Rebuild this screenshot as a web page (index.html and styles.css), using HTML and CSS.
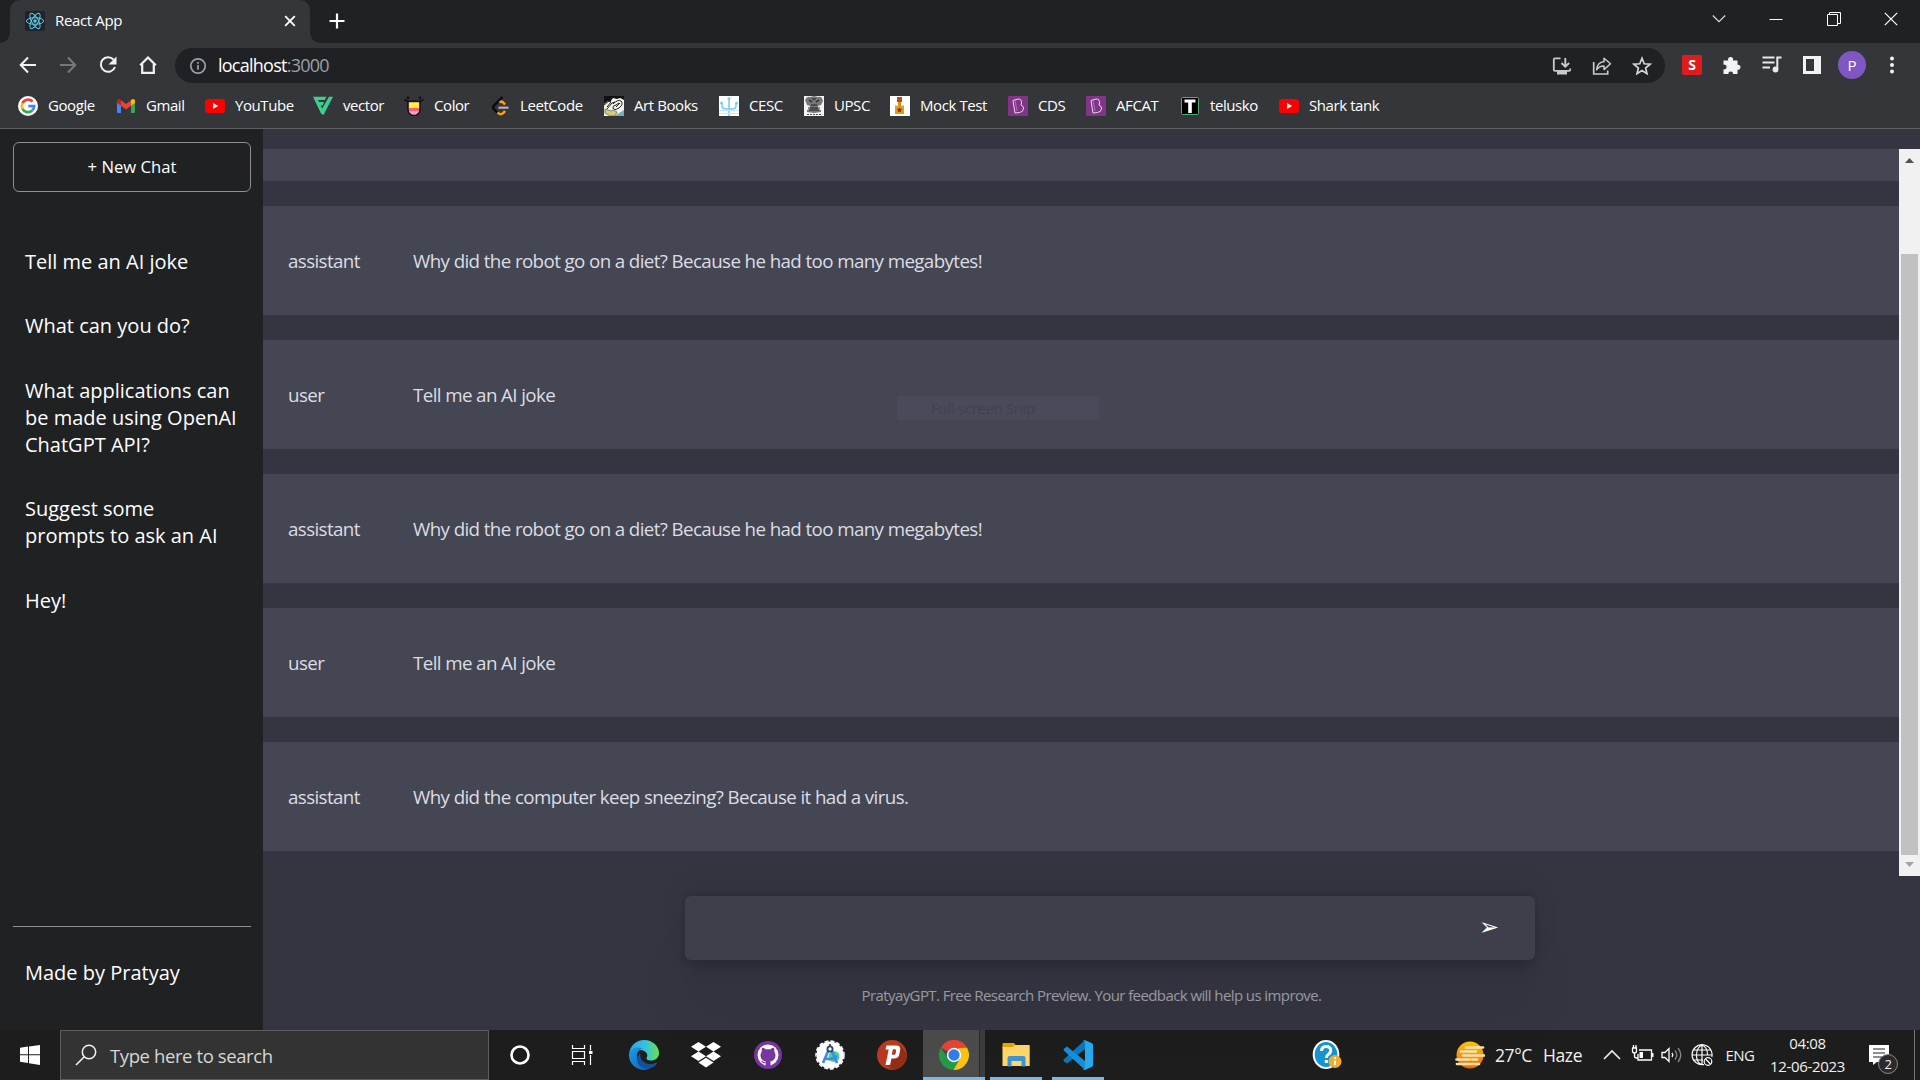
FILE: index.html
```html
<!DOCTYPE html>
<html lang="en">
<head>
<meta charset="utf-8">
<title>React App</title>
<link rel="stylesheet" href="styles.css">
</head>
<body>
<div class="screen">
  <header class="browser">
    <div class="tabstrip">
      <div class="tab">
        <svg class="tab-icon" width="20" height="20" viewBox="0 0 20 20"><rect width="20" height="20" rx="1.5" fill="#20232a"/><g fill="none" stroke="#5ccbe8" stroke-width="1"><ellipse cx="10" cy="10" rx="8.6" ry="3.3"/><ellipse cx="10" cy="10" rx="8.6" ry="3.3" transform="rotate(60 10 10)"/><ellipse cx="10" cy="10" rx="8.6" ry="3.3" transform="rotate(120 10 10)"/></g><circle cx="10" cy="10" r="1.7" fill="#5ccbe8"/></svg>
        <span class="tab-title">React App</span>
        <svg class="tab-close" width="12" height="12" viewBox="0 0 12 12"><path d="M1.2 1.2 10.8 10.8M10.8 1.2 1.2 10.8" stroke="#fff" stroke-width="1.9"/></svg>
      </div>
      <svg class="new-tab" width="16" height="16" viewBox="0 0 16 16"><path d="M8 .5v15M.5 8h15" stroke="#fff" stroke-width="2.2"/></svg>
      <div class="window-buttons">
        <svg width="14" height="14" viewBox="0 0 14 14"><path d="M.8 3.5 7 9.7l6.200-6.200" fill="none" stroke="#ddd" stroke-width="1.100"/></svg>
        <svg width="14" height="14" viewBox="0 0 14 14"><path d="M.5 7.500h13" stroke="#fff" stroke-width="1"/></svg>
        <svg width="14" height="14" viewBox="0 0 14 14"><path d="M.5 2.500h10v11H.5zM2.500 2.500V.500h11V11.500h-3" fill="none" stroke="#fff"/></svg>
        <svg width="14" height="14" viewBox="0 0 14 14"><path d="M.8.800 13.200 13.200M13.200.8.8 13.200" stroke="#fff" stroke-width="1.200"/></svg>
      </div>
    </div>
    <div class="toolbar">
      <div class="nav-buttons">
        <svg width="20" height="20" viewBox="0 0 20 20"><path d="M18 10H3M10 2.500 2.700 10l7.300 7.500" fill="none" stroke="#f1f1f1" stroke-width="2"/></svg>
        <svg width="20" height="20" viewBox="0 0 20 20"><path d="M2 10h15M10 2.500l7.300 7.500-7.300 7.500" fill="none" stroke="#77787b" stroke-width="2"/></svg>
        <svg width="20" height="20" viewBox="0 0 20 20"><path d="M15.500 4.500A7.300 7.300 0 1 0 17 12" fill="none" stroke="#f1f1f1" stroke-width="2"/><path d="M18.500 1.500v8h-8z" fill="#f1f1f1"/></svg>
        <svg width="20" height="20" viewBox="0 0 20 20"><path d="M4.200 9v8.800h11.600V9M2.200 10.300 10 2.500l7.800 7.800" fill="none" stroke="#f1f1f1" stroke-width="2.200"/></svg>
      </div>
      <div class="omnibox">
        <svg width="18" height="18" viewBox="0 0 18 18"><circle cx="9" cy="9" r="7.200" fill="none" stroke="#9aa0a6" stroke-width="1.700"/><path d="M9 8v4.700M9 5v1.800" stroke="#9aa0a6" stroke-width="1.700"/></svg>
        <span class="url">localhost<span class="port">:3000</span></span>
        <div class="omnibox-actions">
          <svg width="20" height="20" viewBox="0 0 20 20"><path d="M8.500 2.300H3A1.200 1.200 0 0 0 1.800 3.500v10.200a1.200 1.200 0 0 0 1.200 1.200h14a1.200 1.200 0 0 0 1.200-1.200V12.500" fill="none" stroke="#c9cacc" stroke-width="1.800"/><path d="M5 15h10v3.500H5z" fill="#c9cacc"/><path d="M13.300 2v8M9.500 7l3.800 3.700L17.100 7" fill="none" stroke="#c9cacc" stroke-width="1.900"/></svg>
          <svg width="20" height="20" viewBox="0 0 20 20"><path d="M1.700 6v12h14v-3.500" fill="none" stroke="#c9cacc" stroke-width="1.700"/><path d="M12 2.300v3.400C7.500 6 5 9 4.600 13.800 6.500 11 8.800 10 12 10v3.600l6.500-5.800z" fill="none" stroke="#c9cacc" stroke-width="1.500" stroke-linejoin="round"/></svg>
          <svg width="20" height="20" viewBox="0 0 20 20"><path d="m10 2.300 2.200 5.500 5.900.4-4.500 3.800 1.400 5.700-5-3.100-5 3.100 1.400-5.700L1.900 8.200l5.900-.4z" fill="none" stroke="#d5d6d8" stroke-width="1.700"/></svg>
        </div>
      </div>
      <div class="extensions">
        <span class="ext-s">S</span>
        <svg width="20" height="20" viewBox="0 0 20 20"><path d="M1.500 5.500h4.700a2.600 2.600 0 1 1 4.800 0h4.500v4.300a2.500 2.500 0 1 1 0 4.900v4.300h-4.400a2.400 2.400 0 1 0-4.800 0H1.500v-4.700a2.400 2.400 0 1 0 0-4.600z" fill="#f1f3f4"/></svg>
        <svg width="20" height="20" viewBox="0 0 20 20"><path d="M.5 2.500h12M.5 7.500h12M.5 12.500h7.500" stroke="#e8eaed" stroke-width="2"/><path d="M15.300 14V2.500h4.200" fill="none" stroke="#e8eaed" stroke-width="2"/><circle cx="13.500" cy="14.500" r="2.900" fill="#e8eaed"/></svg>
        <svg width="20" height="20" viewBox="0 0 20 20"><path d="M1 1h18v18H1zM4 4v12h8V4z" fill="#f1f3f4" fill-rule="evenodd"/></svg>
        <span class="avatar">P</span>
        <svg width="20" height="20" viewBox="0 0 20 20"><g fill="#f1f3f4"><circle cx="10" cy="3.500" r="2"/><circle cx="10" cy="10" r="2"/><circle cx="10" cy="16.500" r="2"/></g></svg>
      </div>
    </div>
    <nav class="bookmarks">
      <a><svg width="20" height="20" viewBox="0 0 20 20"><circle cx="10" cy="10" r="10" fill="#fff"/><g fill="none" stroke-width="2.700"><path d="M14.600 5.600A6.200 6.200 0 0 0 4.500 7.200" stroke="#ea4335"/><path d="M4.500 7.200a6.200 6.200 0 0 0 0 5.600" stroke="#fbbc05"/><path d="M4.500 12.800a6.200 6.200 0 0 0 9.700 1.800" stroke="#34a853"/><path d="M14.200 14.600A6.200 6.200 0 0 0 16.200 10.200H10.300" stroke="#4285f4"/></g></svg><span>Google</span></a>
      <a><svg width="20" height="20" viewBox="0 0 20 20"><path d="M1 5.500v10.200c0 .8.500 1.300 1.200 1.300H5V8.500z" fill="#4285f4"/><path d="M19 5.500v10.200c0 .8-.5 1.300-1.200 1.300H15V8.500z" fill="#34a853"/><path d="M15 4.300V9.700l4-3V5.200c0-2-2-2.800-3.400-1.600z" fill="#fbbc04"/><path d="M5 4.300V9.700l-4-3V5.200c0-2 2-2.800 3.400-1.600z" fill="#c5221f"/><path d="M5 4.300 10 8l5-3.700v5.400l-5 3.800-5-3.800z" fill="#ea4335"/></svg><span>Gmail</span></a>
      <a><svg width="20" height="20" viewBox="0 0 20 20"><rect y="3" width="20" height="14" rx="3.500" fill="#f00"/><path d="m8 7 5.200 3L8 13z" fill="#fff"/></svg><span>YouTube</span></a>
      <a><svg width="20" height="20" viewBox="0 0 20 20"><path d="M0 .8h13.500L11.700 4H5l1 2h5.200L9.500 9.500H7.700l1.500 3L16 .8h4L10.500 19 8 17.500z" fill="#3ecf8e"/></svg><span>vector</span></a>
      <a><svg width="20" height="20" viewBox="0 0 20 20"><circle cx="4" cy="1.800" r="1.400" fill="#111"/><circle cx="16" cy="1.800" r="1.400" fill="#111"/><path d="M.5 3.500 4 5.500h12l3.500-2" fill="none" stroke="#111" stroke-width="1.500"/><path d="M4 5.500v8a6 6 0 0 0 12 0v-8z" fill="#f4a0d8" stroke="#111" stroke-width="1.500"/><path d="M5 6.500h10V12H5z" fill="#fff13a"/><path d="M5 12h10v3H5z" fill="#ff5c75"/></svg><span>Color</span></a>
      <a><svg width="20" height="20" viewBox="0 0 20 20"><path d="m12.500 1-8.600 8.600a2.500 2.500 0 0 0 0 3.500l4 4" fill="none" stroke="#0b0b0b" stroke-width="2.400"/><path d="m9.500 6.500 2-1q1 0 3.500 3M7.500 16.500q4 4 7.500-1.500" fill="none" stroke="#ffa116" stroke-width="2.400"/><path d="M8.500 11.700h10" stroke="#b3b3b3" stroke-width="2.200"/></svg><span>LeetCode</span></a>
      <a><svg width="20" height="20" viewBox="0 0 20 20"><path d="M0 0h20v20H0z" fill="#f3f4ea"/><path d="M0 0h20v4l-4-2-3 1-4-1-3 4-2-1-4 3z" fill="#111"/><path d="m0 9 5-4 2 1-4 5M3 13l5-6 3-1M9 8q5-5 8-3 3 3-2 7-5 3-6 0-1-2 3-3l3-2M12 11l4-4" fill="none" stroke="#222" stroke-width="1"/><path d="m1 13 6 2 2-1 4 2-2 4H6l-5-3z" fill="#dccb72" stroke="#445" stroke-width=".6"/><path d="m12 19 8-5v6h-8z" fill="#6cb5b7"/></svg><span>Art Books</span></a>
      <a><svg width="20" height="20" viewBox="0 0 20 20"><path d="M0 0h20v20H0z" fill="#fff"/><path d="M10 3v17M3 7v2.500q0 3.500 4 3.500h6q4 0 4-3.500V7" fill="none" stroke="#7fcdf5" stroke-width="1.600"/><g fill="#7fcdf5"><circle cx="10" cy="2.500" r="1.600"/><circle cx="2.500" cy="7" r="1.500"/><circle cx="17.500" cy="7" r="1.500"/></g><path d="M0 14.500h20M0 17.500h20" stroke="#c5e7fa"/></svg><span>CESC</span></a>
      <a><svg width="20" height="20" viewBox="0 0 20 20"><path d="M0 0h20v20H0z" fill="#f4f4f4"/><path d="M1 4q2-4 5-3l4-1 4 1q4-1 5 4l-2 4-3 1v3l3 1v2l-7 1-7-1v-2l3-1v-3L3 9z" fill="#777"/><path d="m5 4 3 2M12 6l3-2M8 3h4M7 9h6M5 14h10M4 12h12" stroke="#222" stroke-width="1.200"/><path d="M3 18.500h14" stroke="#555" stroke-dasharray="2 1"/></svg><span>UPSC</span></a>
      <a><svg width="20" height="20" viewBox="0 0 20 20"><path d="M0 0h20v20H0z" fill="#fff"/><path d="M7 1h5v5H7z" fill="#c9451f"/><path d="M8 6h3v4H8z" fill="#c8921c"/><path d="M5 9.500h9V18H5z" fill="#d9a51b"/><path d="m9.500 11 .9 1.800 2 .3-1.500 1.300.4 2-1.800-1-1.800 1 .4-2-1.500-1.300 2-.3z" fill="#a3251b"/></svg><span>Mock Test</span></a>
      <a><svg width="20" height="20" viewBox="0 0 20 20"><rect width="20" height="20" rx="1" fill="#813588"/><path d="m5 4.500 5-1.500q4 0 3.500 4l-.5 2q3 1 2.500 4-.5 3-4 3.500L7 17z" fill="none" stroke="#ead4ed" stroke-width="1"/><path d="m7 4 2 11" stroke="#b990bf" stroke-width=".7"/></svg><span>CDS</span></a>
      <a><svg width="20" height="20" viewBox="0 0 20 20"><rect width="20" height="20" rx="1" fill="#813588"/><path d="m5 4.500 5-1.500q4 0 3.500 4l-.5 2q3 1 2.500 4-.5 3-4 3.500L7 17z" fill="none" stroke="#ead4ed" stroke-width="1"/><path d="m7 4 2 11" stroke="#b990bf" stroke-width=".7"/></svg><span>AFCAT</span></a>
      <a><svg width="20" height="20" viewBox="0 0 20 20"><rect x="1.500" y="1.500" width="17" height="17" rx="1" fill="#000" stroke="#4fae71"/><path d="M4.500 3.500h11v3h-3.700V17H8.200V6.500H4.500z" fill="#fff"/></svg><span>telusko</span></a>
      <a><svg width="20" height="20" viewBox="0 0 20 20"><rect y="3" width="20" height="14" rx="3.500" fill="#f00"/><path d="m8 7 5.200 3L8 13z" fill="#fff"/></svg><span>Shark tank</span></a>
    </nav>
  </header>

  <div class="app">
    <aside class="sidebar">
      <button class="new-chat">+ New Chat</button>
      <ul class="history">
        <li>Tell me an AI joke</li>
        <li>What can you do?</li>
        <li>What applications can be made using OpenAI ChatGPT API?</li>
        <li>Suggest some prompts to ask an AI</li>
        <li>Hey!</li>
      </ul>
      <footer class="credit">Made by Pratyay</footer>
    </aside>
    <main class="chat">
      <div class="feed-wrap">
        <ul class="feed">
          <li class="message cut"></li>
          <li class="message"><span class="role">assistant</span><span>Why did the robot go on a diet? Because he had too many megabytes!</span></li>
          <li class="message"><span class="role">user</span><span>Tell me an AI joke</span></li>
          <li class="message"><span class="role">assistant</span><span>Why did the robot go on a diet? Because he had too many megabytes!</span></li>
          <li class="message"><span class="role">user</span><span>Tell me an AI joke</span></li>
          <li class="message"><span class="role">assistant</span><span>Why did the computer keep sneezing? Because it had a virus.</span></li>
        </ul>
        <div class="scrollbar">
          <svg width="9" height="5" viewBox="0 0 9 5"><path d="M0 5 4.500 0 9 5z" fill="#505050"/></svg>
          <div class="thumb"></div>
          <svg width="9" height="5" viewBox="0 0 9 5"><path d="M0 0h9L4.500 5z" fill="#a3a3a3"/></svg>
        </div>
      </div>
      <div class="composer"><span class="send">➢</span></div>
      <p class="info">PratyayGPT. Free Research Preview. Your feedback will help us improve.</p>
      <div class="snip-tip">Full-screen Snip</div>
    </main>
  </div>

  <footer class="taskbar">
    <div class="start"><svg width="20" height="20" viewBox="0 0 20 20"><path d="M0 2.800 8 1.600v7.600H0zM9 1.500 20 0v9.200H9zM0 10.200h8v7.700l-8-1.200zM9 10.200h11V20L9 18.300z" fill="#fff"/></svg></div>
    <div class="search">
      <svg width="22" height="22" viewBox="0 0 22 22"><circle cx="14" cy="8" r="6.700" fill="none" stroke="#f0f0f0" stroke-width="1.500"/><path d="M9.300 12.700 1 21" stroke="#f0f0f0" stroke-width="1.600"/></svg>
      <span>Type here to search</span>
    </div>
    <div class="launcher">
      <div><svg width="20" height="20" viewBox="0 0 20 20"><circle cx="10" cy="10" r="8.500" fill="none" stroke="#fff" stroke-width="2.600"/></svg></div>
      <div><svg width="22" height="20" viewBox="0 0 22 20"><path d="M1.500 0v3.500h12V0M1.500 20v-3.500h12V20M1.500 6.500h12v7h-12zM19.500 0v5.500M19.500 10v10" fill="none" stroke="#fff" stroke-width="1.200"/><path d="M18 6h3.500v3H18z" fill="#fff"/></svg></div>
      <div><svg width="30" height="30" viewBox="0 0 30 30"><defs><linearGradient id="e1" x1="0" x2="1"><stop offset="0" stop-color="#2aa5e5"/><stop offset=".55" stop-color="#35c1e0"/><stop offset="1" stop-color="#6be04c"/></linearGradient><linearGradient id="e2" x1="0" y1="0" x2="1" y2="1"><stop offset="0" stop-color="#1b9de2"/><stop offset="1" stop-color="#0f5fb5"/></linearGradient></defs><path d="M0 14C1 5.500 7.500 0 15 0c9 0 15 6.500 15 13 0 5-4 7.500-8 7.500-3.500 0-5-1.300-4.500-2.500 1.700-2.300.8-6-3.500-7.500C8 8.500 1.500 9 0 14z" fill="url(#e1)"/><path d="M0 14c1.500-6 8-8 13.500-5.500-5 1.500-6.500 6-5 10.500 2 6 9 9 14.500 7.500C20 29 17.500 30 15 30 6.500 30-.5 23 0 14z" fill="url(#e2)"/><path d="M11.500 13c-1.500 8 6.500 13.500 15.500 9.800.8-.3 1.400.3.800 1.200-3.500 5-11.800 6.300-16.300 2.500-4.500-4-4.500-10.500 0-13.500z" fill="#15509b"/></svg></div>
      <div><svg width="30" height="26" viewBox="0 0 30 26"><path d="m7.500 0 7.500 4.800-7.500 4.700L0 4.800zM22.500 0 30 4.800l-7.500 4.700L15 4.800zM7.500 9.500l7.500 4.800L7.500 19 0 14.300zM22.500 9.500l7.500 4.800-7.500 4.700-7.500-4.700zM15 15.800l7.500 4.700L15 25.500l-7.500-5z" fill="#fff"/></svg></div>
      <div><svg width="28" height="28" viewBox="0 0 28 28"><circle cx="14" cy="14" r="14" fill="#7a36a0"/><circle cx="14" cy="14" r="10.500" fill="#fff"/><path d="M11.500 25c.3-2 0-3.500.3-4.500-3.300-.6-5.300-2.600-5.300-6.200 0-1.500.5-2.700 1.400-3.700-.3-1-.3-2.400.2-3.800 1.500 0 2.700.7 3.900 1.600 1.300-.3 2.800-.3 4.100 0 1.200-.9 2.500-1.600 3.900-1.600.5 1.400.5 2.800.2 3.800.8 1 1.300 2.200 1.300 3.700 0 3.600-2 5.600-5.200 6.200.4 1 .2 2.500.2 4.500z" fill="#7a36a0"/><path d="M11.500 21.700c-2 .3-3-.5-3.800-2" fill="none" stroke="#7a36a0" stroke-width="1.200"/></svg></div>
      <div><svg width="30" height="30" viewBox="0 0 30 30"><circle cx="15" cy="15" r="13.500" fill="#fff"/><circle cx="15" cy="15" r="14" fill="none" stroke="#fff" stroke-width="1.500" stroke-dasharray="4 2"/><circle cx="19" cy="16.500" r="5.500" fill="#3ddc84"/><path d="m14 9-6 14M16 9l6 14M9 17.500q6 4 13-1.500" fill="none" stroke="#4285f4" stroke-width="2.700"/><path d="M15 4v4" stroke="#30465c" stroke-width="1.800"/><circle cx="15" cy="9" r="2.600" fill="#fff" stroke="#30465c" stroke-width="1.800"/></svg></div>
      <div><svg width="30" height="30" viewBox="0 0 30 30"><circle cx="15" cy="15" r="15" fill="#b93a20"/><path d="M23.500 5.500 29.500 14a15 15 0 0 1-13.500 16l-7-6z" fill="#912d18"/><path d="M9.500 5.500h9.500q5 0 4.200 4.500l-.9 4.500q-.8 4-5.300 4h-2.500L13 25H8.500l3.200-15.500H8.500zM15.800 9.300l-1 5.500h2q1.500 0 1.800-1.500l.5-2.500q.2-1.500-1-1.500z" fill="#fff" fill-rule="evenodd"/></svg></div>
      <div class="active"><svg width="30" height="30" viewBox="0 0 30 30"><path d="M15 15 2 7.500A15 15 0 0 1 28 7.500L28 8.200H15z" fill="#ea4335"/><path d="M2 7.500A15 15 0 0 0 15 30l6-11.500L15 15l-6 3.500z" fill="#279847"/><path d="M28 7.700A15 15 0 0 1 14.500 30L21 18.500 19 8z" fill="#fbc116"/><circle cx="15" cy="15" r="7.200" fill="#fff"/><circle cx="15" cy="15" r="5.700" fill="#327bea"/></svg></div>
      <div class="open"><svg width="28" height="26" viewBox="0 0 28 26"><path d="M.5 3V2Q.5 1 1.500 1H12l2 2.500v3H.5z" fill="#e8a209"/><path d="M.5 5h10l3-2H27q.700 0 .7.800V24H.5z" fill="#ffd768"/><path d="M5.500 24.500V16q0-2 2-2h14q2 0 2 2v8.500h-4V19h-10v5.500z" fill="#3f93d2"/></svg></div>
      <div class="open"><svg width="30" height="30" viewBox="0 0 30 30"><path d="M22 0v9L4 23.500l-3-2.200q-1-1 0-2z" fill="#0a78be"/><path d="M22 30v-9L4 6.500 1 8.700q-1 1 0 2z" fill="#168fd8"/><path d="m21.500 0 7 3q1.500.7 1.500 2v20q0 1.300-1.500 2l-7 3q-1.500 0-2-1 2.500 1 2.500-1.500v-25Q22 0 19.500 1z" fill="#27a9f0"/></svg></div>
    </div>
    <div class="tray">
      <svg width="30" height="32" viewBox="0 0 30 32"><ellipse cx="14" cy="15.500" rx="13.300" ry="14.500" fill="#fff"/><ellipse cx="14" cy="15.500" rx="11.300" ry="12.500" fill="#1593d2"/><path d="M9.500 12q0-4.500 4.700-4.500 4.500 0 4.500 4 0 2.500-2.500 4-1.700 1-1.700 3.500M14.300 21v3" fill="none" stroke="#fff" stroke-width="3"/><circle cx="23" cy="22.500" r="6.500" fill="#f3ac25"/><path d="M23 21.500v4.500M23 18v2" stroke="#fff" stroke-width="2"/></svg>
      <svg width="30" height="28" viewBox="0 0 30 28"><defs><linearGradient id="w" x2="0" y2="1"><stop offset="0" stop-color="#ffc20d"/><stop offset="1" stop-color="#ea6a0a"/></linearGradient></defs><circle cx="15" cy="14" r="13.500" fill="url(#w)"/><path d="M11 6.500h17M6 10.500h15M8 14.500h21M1.500 18.500h13M17 18.500h5M2 23h22" stroke="#f7e3ae" stroke-width="2.700" stroke-linecap="round"/></svg>
      <span class="temp">27°C</span><span class="haze">Haze</span>
      <svg width="18" height="20" viewBox="0 0 18 20"><path d="m1 14 8-8 8 8" fill="none" stroke="#f0f0f0" stroke-width="1.600"/></svg>
      <svg width="24" height="20" viewBox="0 0 24 20"><path d="M8 5h12.500v10H7V9M1.500 3v3q0 2 2 2t2-2V3H1M2.500 0v3M5 0v3M3.500 8v3q0 2 2 2h1" fill="none" stroke="#fff" stroke-width="1.300"/><path d="M8.500 7h3.500v6H8.500zM21 8h1.500v4H21z" fill="#fff"/></svg>
      <svg width="22" height="20" viewBox="0 0 22 20"><path d="M1 7.500h3l4-4v13l-4-4H1z" fill="none" stroke="#fff" stroke-width="1.300"/><path d="M11 8q1.500 2 0 4" fill="none" stroke="#fff" stroke-width="1.300"/><path d="M14 5.500q3.500 4.500 0 9M17 3q5.500 7 0 14" fill="none" stroke="#888" stroke-width="1.300"/></svg>
      <svg width="22" height="22" viewBox="0 0 22 22"><g fill="none" stroke="#fff" stroke-width="1.200"><path d="M13 20.500A10 10 0 1 1 20.800 13"/><path d="M10.500 20.500q-5-2-5-9.500t5.500-10q5.500 2 5.500 10M11 1v19M1 11h20M2.500 6h17M2.500 16H12"/><circle cx="17" cy="17.500" r="3.800"/><path d="m14.500 15 5 5"/></g></svg>
      <span class="lang">ENG</span>
      <span class="clock"><span>04:08</span><span>12-06-2023</span></span>
      <span class="notes"><svg width="20" height="20" viewBox="0 0 20 20"><path d="M0 0h20v17H8l-4 3v-3H0z" fill="#fff"/><path d="M4 4h12M4 8h12M4 12h9" stroke="#222" stroke-width="1.200"/></svg><span class="badge">2</span></span>
      <span class="peek"></span>
    </div>
  </footer>
</div>
</body>
</html>
```
FILE: styles.css
```css
* { box-sizing: border-box; }
body { margin: 0; background: #202123; font-family: "Open Sans", "Noto Sans", sans-serif; color: #fff; }
ul { list-style: none; margin: 0; padding: 0; }
svg { display: block; flex: none; }
.screen { width: 1920px; height: 1080px; display: grid; grid-template-rows: 129px 901px 50px; overflow: hidden; }

/* browser chrome */
.browser { display: grid; grid-template-rows: 43px 45px 40px; background: #35363a; border-bottom: 1px solid #5f6063; font-size: 15px; }
.tabstrip { display: flex; align-items: center; background: #202124; padding-left: 10px; }
.tab { position: relative; display: flex; align-items: center; width: 300px; height: 43px; padding: 0 14px 1px 15px; background: #35363a; border-radius: 10px 10px 0 0; }
.tab::before, .tab::after { content: ""; position: absolute; bottom: 0; width: 10px; height: 10px; }
.tab::before { left: -10px; background: radial-gradient(circle at 0 0, transparent 9.500px, #35363a 10px); }
.tab::after { right: -10px; background: radial-gradient(circle at 100% 0, transparent 9.500px, #35363a 10px); }
.tab-title { flex: 1; margin: 0 0 2px 10px; letter-spacing: -0.350px; }
.new-tab { margin: 0 0 1px 19px; }
.window-buttons { display: flex; gap: 43.500px; margin-left: auto; padding: 0 22px 6px 0; }
.toolbar { display: flex; align-items: center; }
.nav-buttons { display: flex; gap: 20px; padding: 0 0 1px 18px; width: 175px; }
.omnibox { display: flex; align-items: center; width: 1490px; height: 35px; border-radius: 18px; background: #202124; padding: 0 13px 0 14px; }
.url { margin: -2px 0 0 11px; font-size: 18px; letter-spacing: -0.750px; }
.port { color: #9aa0a6; }
.omnibox-actions { display: flex; gap: 20px; margin-left: auto; }
.extensions { display: flex; align-items: center; gap: 20px; padding: 0 0 1px 17px; }
.ext-s { width: 20px; height: 20px; background: #e01b1b; border-radius: 2px; font: 700 14px/20px "Open Sans", sans-serif; text-align: center; }
.avatar { width: 28px; height: 28px; margin: 0 -4px; border-radius: 50%; background: #7e57c2; font-size: 15px; line-height: 28px; text-align: center; }
.bookmarks { display: grid; grid-template-columns: 98px 89px 108px 91px 86px 114px 115px 85px 86px 118px 78px 94px 99px 120px; padding-left: 18px; height: 36px; }
.bookmarks a { display: flex; align-items: center; gap: 10px; white-space: nowrap; letter-spacing: -0.420px; }
.bookmarks a span { margin-top: -2px; }

/* sidebar */
.app { display: grid; grid-template-columns: 263px 1fr; }
.sidebar { display: flex; flex-direction: column; background: #202123; padding: 13px 12px 0 13px; font-size: 20px; line-height: 27px; }
.new-chat { height: 50px; border: 1px solid #909091; border-radius: 6px; background: transparent; color: #fff; padding: 0 0 2px; font: 16.670px "Open Sans", sans-serif; }
.history { display: flex; flex-direction: column; gap: 37.500px; padding: 55.600px 12px 0; }
.credit { margin-top: auto; height: 104px; border-top: 1px solid #909091; padding: 32px 12px 0; }

/* chat */
.chat { position: relative; display: flex; flex-direction: column; align-items: center; background: #343541; padding-top: 20px; }
.feed-wrap { display: flex; width: 100%; height: 727px; }
.feed { flex: 1; display: flex; flex-direction: column; gap: 25px; }
.message { display: flex; align-items: center; height: 109px; padding: 0 25px; background: #444654; color: #dcdde2; font-size: 18.750px; letter-spacing: -0.610px; }
.message.cut { height: 32px; }
.role { width: 125px; }
.scrollbar { display: flex; flex-direction: column; align-items: center; justify-content: space-between; width: 21px; padding: 9px 0; background: #f1f1f1; }
.thumb { width: 17px; height: 601px; margin-top: 84px; background: #c1c1c1; }
.composer { display: flex; align-items: center; justify-content: flex-end; width: 850px; height: 64px; margin: 20px 0 0 37px; padding: 0 36px 2px 0; border-radius: 6px; background: rgba(255,255,255,.05); box-shadow: 0 54px 55px rgba(0,0,0,.05), 0 -12px 30px rgba(0,0,0,.05), 0 4px 6px rgba(0,0,0,.05), 0 12px 13px rgba(0,0,0,.09), 0 -3px 5px rgba(0,0,0,.09); }
.send { font: 24px "DejaVu Sans", sans-serif; }
.info { margin: 25px 0 0; font-size: 15px; line-height: 20px; color: rgba(255,255,255,.5); letter-spacing: -0.590px; }
.snip-tip { position: absolute; left: 634px; top: 267px; width: 202px; height: 24px; padding-left: 34px; background: #494b5a; color: #40424f; font-size: 15px; line-height: 24px; letter-spacing: -0.400px; }

/* taskbar */
.taskbar { display: grid; grid-template: 50px / 60px 429px 621px 810px; background: #1d1d1d; }
.start { display: grid; place-items: center; }
.search { display: flex; align-items: center; gap: 13px; padding-left: 14px; border: 1px solid #5d5d5d; background: #333; color: #d6d6d6; font-size: 18.500px; letter-spacing: -0.400px; }
.launcher { display: grid; grid-template-columns: repeat(10, 62px); }
.launcher > div { display: grid; place-items: center; }
.launcher .active { background: linear-gradient(90deg, #4b4b4b 56px, #2b2b2b 56px 57px, #3c3c3c 57px); border-bottom: 3px solid #76b9ed; padding-top: 3px; }
.launcher .open { margin: 0 5px; padding-top: 3px; border-bottom: 3px solid #76b9ed; }
.tray { display: grid; grid-template-columns: 143px 40px 48px 60px 28px 30px 30px 34.500px 37px 106.500px 45px 1px; align-items: center; padding-left: 202px; font-size: 17.500px; letter-spacing: -0.400px; color: #f0f0f0; white-space: nowrap; }
.lang { font-size: 15px; letter-spacing: -0.600px; }
.clock { display: flex; flex-direction: column; padding-right: 16.500px; font-size: 15px; line-height: 23px; letter-spacing: -0.350px; text-align: center; }
.notes { position: relative; }
.badge { position: absolute; left: 9px; top: 9px; width: 20px; height: 20px; border-radius: 50%; border: 1px solid #888; background: #2b2b2b; font-size: 13px; line-height: 18px; text-align: center; }
.peek { width: 1px; height: 50px; background: #777; }
```
